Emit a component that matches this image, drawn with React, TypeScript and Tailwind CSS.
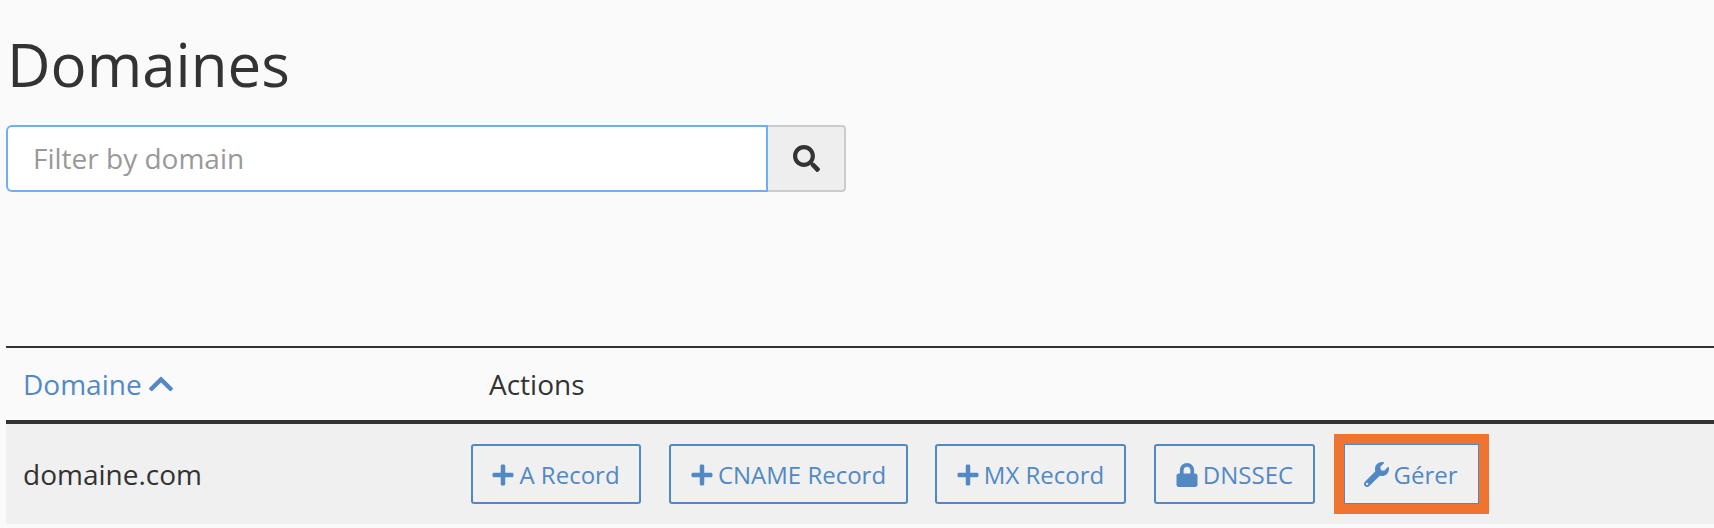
import React from "react";
import { FaChevronUp, FaLock, FaPlus, FaSearch, FaWrench } from "react-icons/fa";

const buttonClass =
  "flex h-[60px] items-center justify-center gap-[4px] rounded-[3px] border-2 border-[#5289c5] pt-[1px] pr-[1px] text-[24px] text-[#5289c5]";

export default function App() {
  return (
    <div className="min-h-screen bg-[#fafafa] pl-[6px] text-[#333] [font-family:'Open_Sans',sans-serif]">
      <h1 className="pt-[24px] pl-[1px] text-[60px] leading-[80px] font-normal">Domaines</h1>

      <div className="mt-[21px] flex h-[67px] w-[840px]">
        <div className="flex flex-1 items-center rounded-l-[6px] border-2 border-[#70aef0] bg-white pb-[2px] pl-[25px] text-[28px] text-[#999]">
          Filter by domain
        </div>
        <button className="flex w-[78px] items-center justify-center rounded-r-[4px] border-2 border-l-0 border-[#ccc] bg-[#eee] text-[#333]">
          <FaSearch className="size-[27px]" />
        </button>
      </div>

      <div className="mt-[154px] flex h-[74px] items-center border-t-2 border-[#333] text-[28px]">
        <div className="flex w-[483px] items-center gap-[5px] pl-[17px] text-[#5289c5]">
          Domaine
          <FaChevronUp className="size-[28px]" />
        </div>
        <div>Actions</div>
      </div>

      <div className="flex h-[104px] items-center border-t-4 border-[#333] bg-[#f0f0f0] text-[28px]">
        <div className="w-[465px] pl-[17px]">domaine.com</div>
        <div className="flex items-center">
          <button className={`${buttonClass} w-[170px]`}>
            <FaPlus className="size-[24px]" />A Record
          </button>
          <button className={`${buttonClass} ml-[28px] w-[239px]`}>
            <FaPlus className="size-[24px]" />CNAME Record
          </button>
          <button className={`${buttonClass} ml-[27px] w-[191px]`}>
            <FaPlus className="size-[24px]" />MX Record
          </button>
          <button className={`${buttonClass} ml-[28px] w-[161px]`}>
            <FaLock className="size-[24px]" />DNSSEC
          </button>
          <button className={`${buttonClass} ml-[29px] w-[135px] rounded-none !border outline-[10px] outline-[#ee7430]`}>
            <FaWrench className="size-[25px]" />Gérer
          </button>
        </div>
      </div>
    </div>
  );
}
